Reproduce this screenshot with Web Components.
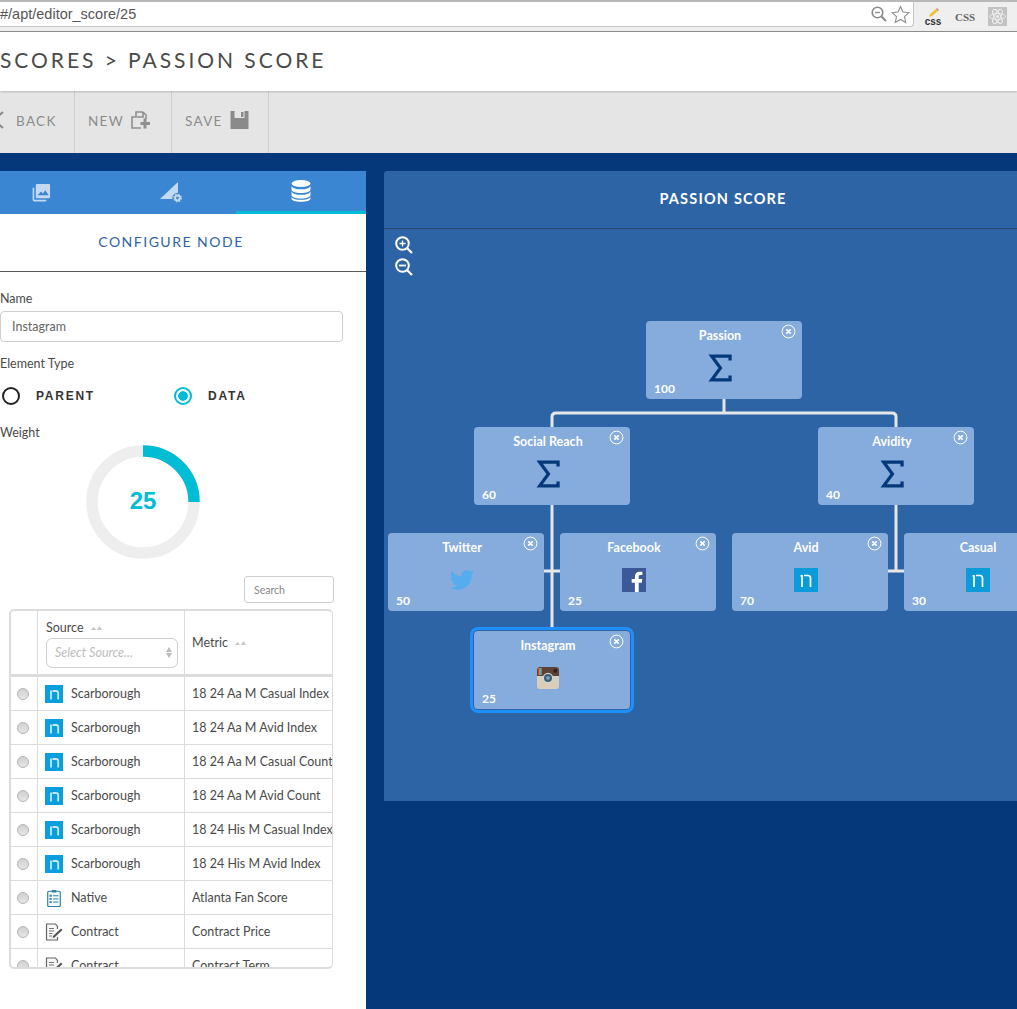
<!DOCTYPE html>
<html lang="en">
<head>
<meta charset="utf-8">
<title>Passion Score</title>
<style>
  html, body { margin: 0; padding: 0; }
  body { width: 1017px; height: 1009px; overflow: hidden; font-family: Lato, "Liberation Sans", sans-serif; background: #04387b; }
</style>
</head>
<body>
<browser-bar>#/apt/editor_score/25</browser-bar>
<page-title>SCORES &gt; PASSION SCORE</page-title>
<tool-bar>
  <tool-item icon="back">BACK</tool-item>
  <tool-item icon="new" after>NEW</tool-item>
  <tool-item icon="save" after>SAVE</tool-item>
</tool-bar>
<editor-main>
  <side-panel>
    <side-tabs></side-tabs>
    <node-form></node-form>
    <source-table>
      <source-row icon="nielsen" source="Scarborough" metric="18 24 Aa M Casual Index"></source-row>
      <source-row icon="nielsen" source="Scarborough" metric="18 24 Aa M Avid Index"></source-row>
      <source-row icon="nielsen" source="Scarborough" metric="18 24 Aa M Casual Count"></source-row>
      <source-row icon="nielsen" source="Scarborough" metric="18 24 Aa M Avid Count"></source-row>
      <source-row icon="nielsen" source="Scarborough" metric="18 24 His M Casual Index"></source-row>
      <source-row icon="nielsen" source="Scarborough" metric="18 24 His M Avid Index"></source-row>
      <source-row icon="native" source="Native" metric="Atlanta Fan Score"></source-row>
      <source-row icon="contract" source="Contract" metric="Contract Price"></source-row>
      <source-row icon="contract" source="Contract" metric="Contract Term"></source-row>
    </source-table>
  </side-panel>
  <score-canvas heading="PASSION SCORE">
    <tree-node x="262" y="150" name="Passion" weight="100" icon="sigma"></tree-node>
    <tree-node x="90" y="256" name="Social Reach" weight="60" icon="sigma"></tree-node>
    <tree-node x="434" y="256" name="Avidity" weight="40" icon="sigma"></tree-node>
    <tree-node x="4" y="362" name="Twitter" weight="50" icon="twitter"></tree-node>
    <tree-node x="176" y="362" name="Facebook" weight="25" icon="facebook"></tree-node>
    <tree-node x="348" y="362" name="Avid" weight="70" icon="nielsen-thin"></tree-node>
    <tree-node x="520" y="362" name="Casual" weight="30" icon="nielsen-thin"></tree-node>
    <tree-node x="90" y="460" name="Instagram" weight="25" icon="instagram" selected></tree-node>
  </score-canvas>
</editor-main>

<script>
// every icon on the page, drawn by hand
const ICONS = {
  back: `<svg viewBox="0 0 16 18"><path d="M13 1 4 9l9 8" fill="none" stroke="#8a8a8a" stroke-width="2"/></svg>`,
  new: `<svg viewBox="0 0 19 18"><path d="M12 1H5v5H1v11h9M12 1v5h-6M12 1l3 3v4" fill="none" stroke="#8f8f8f" stroke-width="1.6"/><path d="M14 7.5v10M9.5 12.5h9.5" stroke="#8f8f8f" stroke-width="3"/></svg>`,
  save: `<svg viewBox="0 0 18 18"><path d="M0 0h18v18H0z" fill="#8a8a8a"/><path d="M4 0h10v7H4z" fill="#e5e5e5"/><path d="M10.500 1h2.500v5h-2.500z" fill="#8a8a8a"/></svg>`,
  images: `<svg viewBox="0 0 20 20"><path d="M5 1h13a1 1 0 0 1 1 1v13a1 1 0 0 1-1 1H5a1 1 0 0 1-1-1V2a1 1 0 0 1 1-1z" fill="#c3d9f1"/><path d="M6 13l3.500-4 2 2 2.500-3.500L17.500 13z" fill="#3b86d2"/><path d="M1.500 5v12.500a1 1 0 0 0 1 1H15" fill="none" stroke="#c3d9f1" stroke-width="1.700"/></svg>`,
  shape: `<svg viewBox="0 0 22 21"><path d="M18 0v17H0z" fill="#c3d9f1"/><circle cx="17.500" cy="16" r="5.200" fill="#3b86d2"/><circle cx="17.500" cy="16" r="2.400" fill="none" stroke="#c3d9f1" stroke-width="2"/><circle cx="17.500" cy="16" r="3.800" fill="none" stroke="#c3d9f1" stroke-width="1.200" stroke-dasharray="1.500 1.500"/></svg>`,
  data: `<svg viewBox="0 0 20 22"><ellipse cx="10" cy="3.500" rx="9.500" ry="3.500" fill="#fff"/><path d="M.5 6c1 2.500 5 3.300 9.500 3.300S18.500 8.500 19.500 6v3.500c0 2.200-4 3.600-9.500 3.600S.5 11.700.5 9.500zM.5 11.500c1 2.500 5 3.300 9.500 3.300s8.500-.8 9.500-3.300V15c0 2.200-4 3.600-9.500 3.600S.5 17.200.5 15z" fill="#fff"/><path d="M.5 17c1 2 5 2.800 9.500 2.800s8.500-.8 9.500-2.800v1.500c0 2-4 3.300-9.500 3.300S.5 20.500.5 18.500z" fill="#fff"/></svg>`,
  sigma: `<svg viewBox="0 0 26 32"><path d="M24.500 7.500V2.500H3.500l10 13.500-10 13.500h21v-5" fill="none" stroke="#04387b" stroke-width="3.700"/></svg>`,
  twitter: `<svg viewBox="0 0 24 24"><path fill="#55acee" d="M23.953 4.570a10 10 0 0 1-2.825.775 4.958 4.958 0 0 0 2.163-2.723c-.951.555-2.005.959-3.127 1.184a4.920 4.920 0 0 0-8.384 4.482C7.690 8.095 4.067 6.130 1.640 3.162a4.822 4.822 0 0 0-.666 2.475c0 1.710.870 3.213 2.188 4.096a4.904 4.904 0 0 1-2.228-.616v.060a4.923 4.923 0 0 0 3.946 4.827 4.996 4.996 0 0 1-2.212.085 4.936 4.936 0 0 0 4.604 3.417 9.867 9.867 0 0 1-6.102 2.105c-.390 0-.779-.023-1.170-.067a13.995 13.995 0 0 0 7.557 2.209c9.053 0 13.998-7.496 13.998-13.985 0-.210 0-.420-.015-.630A9.935 9.935 0 0 0 24 4.590z"/></svg>`,
  facebook: `<svg viewBox="0 0 24 24"><path fill="#3b5998" d="M0 0h24v24H0z"/><path fill="#fff" d="M16.700 24v-9.300h3.100l.5-3.600h-3.600V8.800c0-1 .3-1.800 1.800-1.800h1.900V3.800c-.3 0-1.500-.1-2.800-.1-2.800 0-4.700 1.700-4.700 4.800v2.600H9.700v3.600h3.200V24z"/></svg>`,
  nielsen: `<svg viewBox="0 0 18 18"><path fill="#0a9fdc" d="M0 0h18v18H0z"/><path d="M6 5.500v9" fill="none" stroke="#c7e7f6" stroke-width="1.800"/><path d="M7.500 6h3.500q2.200 0 2.200 2.200v6.300" fill="none" stroke="#c7e7f6" stroke-width="1.800"/></svg>`,
  "nielsen-thin": `<svg viewBox="0 0 24 24"><path fill="#0a9bd8" d="M0 0h24v24H0z"/><path d="M6.500 7.800h1.500V19M10 7.500h4q2.500 0 2.500 2.700V19" fill="none" stroke="#fff" stroke-width="1.700"/></svg>`,
  instagram: `<svg viewBox="0 0 22 22"><rect width="22" height="22" rx="3" fill="#d9cfbb"/><path d="M0 9V3a3 3 0 0 1 3-3h16a3 3 0 0 1 3 3v6h-6.500a5.500 5.500 0 0 0-9 0z" fill="#5b4436"/><path d="M1.200 1h1.200v7h-1.200z" fill="#e0413c"/><path d="M2.400 1h1.200v7h-1.200z" fill="#f0c33c"/><path d="M3.600 1h1.200v7h-1.200z" fill="#4da0d8"/><circle cx="11" cy="11" r="5.200" fill="#cfd3d6"/><circle cx="11" cy="11" r="4" fill="#3f6178"/><circle cx="11" cy="11" r="1.800" fill="#86a3b8"/><rect x="16.500" y="2" width="3.500" height="3.500" fill="#2e241d"/></svg>`,
  native: `<svg viewBox="0 0 18 20"><rect x="2" y="2.500" width="14" height="17" rx="1.500" fill="#f4f9fc" stroke="#2f7fa8" stroke-width="1.300"/><path d="M6.500 1h5v3h-5z" fill="#2f7fa8"/><path d="M8 7.500h6M8 11h6M8 14.500h6" stroke="#2f7fa8" stroke-width="1.100"/><path d="M4 6.500h2.500v2H4zM4 10h2.500v2H4zM4 13.500h2.500v2H4z" fill="#2f7fa8"/></svg>`,
  contract: `<svg viewBox="0 0 18 18"><path d="M12.500 6V3.500L10.500 1H1.500v16h11v-3" fill="#f7f7f7" stroke="#666" stroke-width="1.200"/><path d="M4 5.500h5M4 8h5M4 10.500h3.500M4 13h3" stroke="#777" stroke-width="1"/><path d="M8 13l8-7.500 1.500 1.500-8 7.500-2 .5z" fill="#555"/></svg>`,
  close: `<svg viewBox="0 0 15 15"><circle cx="7.500" cy="7.500" r="6.400" fill="none" stroke="#fff" stroke-width="1"/><path d="M5.300 5.300l4.400 4.400M9.700 5.300l-4.400 4.400" stroke="#fff" stroke-width="1.700"/></svg>`,
  zoomin: `<svg viewBox="0 0 18 18"><circle cx="7.500" cy="7.500" r="6.300" fill="none" stroke="#fff" stroke-width="2"/><path d="M12 12l5 5" stroke="#fff" stroke-width="2.200"/><path d="M7.500 4.500v6M4.500 7.500h6" stroke="#fff" stroke-width="1.300"/></svg>`,
  zoomout: `<svg viewBox="0 0 18 18"><circle cx="7.500" cy="7.500" r="6.300" fill="none" stroke="#fff" stroke-width="2"/><path d="M12 12l5 5" stroke="#fff" stroke-width="2.200"/><path d="M4 7.500h7" stroke="#fff" stroke-width="1.800"/></svg>`
};

class BrowserBar extends HTMLElement {
  constructor() {
    super();
    this.attachShadow({ mode: 'open' });
  }

  connectedCallback() {
    this.shadowRoot.innerHTML = `
      <style>
        :host { display: flex; height: 32px; box-sizing: border-box; background: #efefef; border-top: 2px solid #b9b9b9; border-bottom: 1px solid #8f8f8f; font-family: "Liberation Sans", sans-serif; }
        .url { width: 914px; height: 25px; box-sizing: border-box; background: #fff; border: 1px solid #c4c4c4; border-left: 0; border-top: 0; border-radius: 0 0 4px 0; display: flex; align-items: center; justify-content: space-between; padding-right: 3px; font-size: 14.500px; color: #555; }
        .btns { display: flex; gap: 4px; align-items: center; }
        .exts { flex: 1; display: flex; align-items: center; position: relative; }
        .pencil { width: 24px; margin-left: 7px; display: flex; flex-direction: column; align-items: center; font-size: 10px; font-weight: bold; line-height: 8px; color: #333; }
        .css { margin-left: 10px; font: bold 11px "Liberation Serif", serif; color: #666; }
        .atom { margin-left: 13px; width: 19px; height: 19px; background: #c2c2c2; }
        svg { display: block; }
      </style>
      <div class="url">
        <span><slot></slot></span>
        <span class="btns">
          <svg width="16" height="16" viewBox="0 0 16 16"><circle cx="6.500" cy="6.500" r="5.300" fill="none" stroke="#8a8a8a" stroke-width="1.600"/><path d="M10.500 10.500l4.500 4.500" stroke="#8a8a8a" stroke-width="2"/><path d="M4 6.500h5" stroke="#8a8a8a" stroke-width="1.300"/></svg>
          <svg width="19" height="19" viewBox="0 0 20 20"><path d="M10 1.500l2.600 5.800 6.200.7-4.600 4.200 1.300 6.200L10 15.200l-5.500 3.200 1.300-6.200L1.200 8l6.200-.7z" fill="none" stroke="#8a8a8a" stroke-width="1.100"/></svg>
        </span>
      </div>
      <div class="exts">
        <span class="pencil">
          <svg width="14" height="10" viewBox="0 0 14 10"><path d="M3 9l1-3 6-5 2 2-6 5z" fill="#f2c230"/><path d="M10 1l1-1 2 2-1 1z" fill="#e77a8c"/></svg>css
        </span>
        <span class="css">CSS</span>
        <span class="atom">
          <svg width="19" height="19" viewBox="0 0 19 19"><g fill="none" stroke="#efefef" stroke-width=".9"><ellipse cx="9.500" cy="9.500" rx="8" ry="3"/><ellipse cx="9.500" cy="9.500" rx="8" ry="3" transform="rotate(60 9.500 9.500)"/><ellipse cx="9.500" cy="9.500" rx="8" ry="3" transform="rotate(120 9.500 9.500)"/></g><circle cx="9.500" cy="9.500" r="1.500" fill="#efefef"/></svg>
        </span>
      </div>
    `;
  }
}

class PageTitle extends HTMLElement {
  constructor() {
    super();
    this.attachShadow({ mode: 'open' });
  }

  connectedCallback() {
    this.shadowRoot.innerHTML = `
      <style>
        :host { display: flex; align-items: center; height: 59px; box-sizing: border-box; padding-bottom: 5px; background: #fff; font-size: 21px; letter-spacing: 2.950px; color: #4a4a4a; position: relative; box-shadow: 0 1px 2px rgba(0,0,0,.2); }
      </style>
      <slot></slot>
    `;
  }
}

class ToolBar extends HTMLElement {
  constructor() {
    super();
    this.attachShadow({ mode: 'open' });
  }

  connectedCallback() {
    this.shadowRoot.innerHTML = `
      <style>
        :host { display: flex; height: 62px; margin-left: -22px; background: #e5e5e5; }
      </style>
      <slot></slot>
    `;
  }
}

class ToolItem extends HTMLElement {
  constructor() {
    super();
    this.attachShadow({ mode: 'open' });
  }

  connectedCallback() {
    const name = this.getAttribute('icon');
    const size = name === 'back' ? 'width:16px;height:18px' : 'width:19px;height:18px';
    const icon = `<span class="icon" style="${size}">${ICONS[name]}</span>`;
    this.shadowRoot.innerHTML = `
      <style>
        :host { display: flex; align-items: center; gap: 7px; width: 97px; box-sizing: border-box; padding: 0 0 2px 13px; border-right: 1px solid #cfcfcf; font-size: 13.500px; letter-spacing: 1.300px; color: #8c8c8c; }
        .icon { display: block; margin-top: -2px; }
        svg { display: block; width: 100%; height: 100%; }
        :host([icon="back"]) { gap: 10px; padding-left: 12px; }
      </style>
      ${this.hasAttribute('after') ? '<slot></slot>' + icon : icon + '<slot></slot>'}
    `;
  }
}

class EditorMain extends HTMLElement {
  constructor() {
    super();
    this.attachShadow({ mode: 'open' });
  }

  connectedCallback() {
    this.shadowRoot.innerHTML = `
      <style>
        :host { display: flex; align-items: flex-start; gap: 18px; height: 838px; padding-top: 18px; margin-left: -24px; background: #04387b; overflow: hidden; }
      </style>
      <slot></slot>
    `;
  }
}

class SidePanel extends HTMLElement {
  constructor() {
    super();
    this.attachShadow({ mode: 'open' });
  }

  connectedCallback() {
    this.shadowRoot.innerHTML = `
      <style>
        :host { display: block; flex: none; width: 390px; height: 838px; background: #fff; }
      </style>
      <slot></slot>
    `;
  }
}

class SideTabs extends HTMLElement {
  constructor() {
    super();
    this.attachShadow({ mode: 'open' });
  }

  connectedCallback() {
    this.shadowRoot.innerHTML = `
      <style>
        :host { display: block; }
        .tabs { display: flex; height: 43px; background: #3b86d2; }
        .tab { flex: 1; display: flex; align-items: center; justify-content: center; box-sizing: border-box; }
        .tab.on { border-bottom: 3px solid #00bcd4; }
        .tab svg { display: block; }
        h2 { margin: 0; height: 58px; box-sizing: border-box; display: flex; align-items: center; justify-content: center; border-bottom: 1px solid #5a5a5a; font-size: 14px; font-weight: 400; letter-spacing: 1.500px; color: #2d64a6; padding-bottom: 3px; }
      </style>
      <div class="tabs">
        <div class="tab"><svg width="19" height="19" viewBox="0 0 20 20">${ICONS.images.replace(/<\/?svg[^>]*>/g, '')}</svg></div>
        <div class="tab"><svg width="22" height="21" viewBox="0 0 22 21">${ICONS.shape.replace(/<\/?svg[^>]*>/g, '')}</svg></div>
        <div class="tab on"><svg width="20" height="22" viewBox="0 0 20 22">${ICONS.data.replace(/<\/?svg[^>]*>/g, '')}</svg></div>
      </div>
      <h2>CONFIGURE NODE</h2>
    `;
  }
}

class NodeForm extends HTMLElement {
  constructor() {
    super();
    this.attachShadow({ mode: 'open' });
  }

  connectedCallback() {
    this.shadowRoot.innerHTML = `
      <style>
        :host { display: block; padding: 19px 23px 0 24px; font-size: 12.500px; color: #4a4a4a; }
        label { display: block; line-height: 16px; }
        .input { height: 31px; box-sizing: border-box; margin: 4px 0 14px; padding-left: 11px; display: flex; align-items: center; border: 1px solid #cfcfcf; border-radius: 4px; color: #666; }
        .types { display: flex; align-items: center; height: 18px; margin: 15px 0 20px 2px; font: bold 12px "Liberation Sans", sans-serif; letter-spacing: 1.750px; color: #333; }
        .types span { display: flex; align-items: center; gap: 16px; }
        .types .parent { width: 172px; }
        .types .data { gap: 16px; }
        .ring { box-sizing: border-box; display: block; width: 18px; height: 18px; border-radius: 50%; border: 2px solid #222; }
        .data .ring { border-color: #00bcd4; background: radial-gradient(circle, #00bcd4 0 4.500px, transparent 5px); }
      </style>
      <label>Name</label>
      <div class="input">Instagram</div>
      <label>Element Type</label>
      <div class="types">
        <span class="parent"><i class="ring"></i>PARENT</span>
        <span class="data"><i class="ring"></i>DATA</span>
      </div>
      <label>Weight</label>
      <weight-donut value="25"></weight-donut>
    `;
  }
}

class WeightDonut extends HTMLElement {
  constructor() {
    super();
    this.attachShadow({ mode: 'open' });
  }

  connectedCallback() {
    this.shadowRoot.innerHTML = `
      <style>
        :host { display: block; width: 114px; height: 115px; margin: 4px 0 0 86px; position: relative; }
        svg { display: block; }
        b { position: absolute; inset: 0; display: flex; align-items: center; justify-content: center; font: bold 24px "Liberation Sans", sans-serif; color: #00bcd4; padding-bottom: 3px; box-sizing: border-box; }
      </style>
      <svg width="114" height="114" viewBox="0 0 115 115">
        <circle cx="57.500" cy="57.500" r="51.500" fill="none" stroke="#eeeeee" stroke-width="11.500"/>
        <path d="M57.500 6a51.500 51.500 0 0 1 51.500 51.500" fill="none" stroke="#00bcd4" stroke-width="11.500"/>
      </svg>
      <b>${this.getAttribute('value')}</b>
    `;
  }
}

class SourceTable extends HTMLElement {
  constructor() {
    super();
    this.attachShadow({ mode: 'open' });
  }

  connectedCallback() {
    this.shadowRoot.innerHTML = `
      <style>
        :host { display: block; margin-left: 33px; width: 324px; font-size: 12.500px; color: #4a4a4a; }
        .search { width: 90px; height: 27px; box-sizing: border-box; margin: 16px 0 6px 235px; padding-left: 9px; display: flex; align-items: center; border: 1px solid #cfcfcf; border-radius: 3px; font-size: 10.500px; color: #888; }
        .box { height: 360px; box-sizing: border-box; border: 2px solid #dcdcdc; border-right-width: 1.500px; border-radius: 5px; overflow: hidden; }
        .head { display: grid; grid-template-columns: 27px 147px 1fr; height: 66px; box-sizing: border-box; border-bottom: 3px solid #dcdcdc; }
        .head > div { border-right: 1px solid #dcdcdc; box-sizing: border-box; }
        .head > div:last-child { border-right: 0; padding: 24px 0 0 7px; }
        .src { padding: 9px 6px 0 8px; }
        .sort { display: inline-block; width: 12px; height: 5px; margin-left: 4px; vertical-align: 2px; }
        .select { height: 30px; box-sizing: border-box; margin-top: 3px; border: 1px solid #cfcfcf; border-radius: 6px; display: flex; align-items: center; justify-content: space-between; padding: 0 5px 2px 8px; font-style: italic; font-size: 12.500px; color: #bdbdbd; }
        .arrows { display: flex; flex-direction: column; gap: 1px; }
      </style>
      <div class="search">Search</div>
      <div class="box">
        <div class="head">
          <div></div>
          <div class="src">Source <svg class="sort" viewBox="0 0 12 5"><path d="M0 5l2.500-3L5 5zM6 5l2.500-4L11 5z" fill="#c4c4c4"/></svg>
            <div class="select">Select Source...
              <span class="arrows">
                <svg width="6" height="5" viewBox="0 0 6 5"><path d="M3 0l3 5H0z" fill="#bbb"/></svg>
                <svg width="6" height="5" viewBox="0 0 6 5"><path d="M3 5L0 0h6z" fill="#bbb"/></svg>
              </span>
            </div>
          </div>
          <div>Metric <svg class="sort" viewBox="0 0 12 5"><path d="M0 5l2.500-3L5 5zM6 5l2.500-4L11 5z" fill="#c4c4c4"/></svg></div>
        </div>
        <slot></slot>
      </div>
    `;
  }
}

class SourceRow extends HTMLElement {
  constructor() {
    super();
    this.attachShadow({ mode: 'open' });
  }

  connectedCallback() {
    this.shadowRoot.innerHTML = `
      <style>
        :host { display: grid; grid-template-columns: 27px 147px 1fr; height: 34px; box-sizing: border-box; border-bottom: 1px solid #dcdcdc; }
        div { display: flex; align-items: center; box-sizing: border-box; white-space: nowrap; overflow: hidden; }
        .pick { justify-content: center; padding-right: 2px; border-right: 1px solid #dcdcdc; }
        .pick i { display: block; width: 10px; height: 10px; border-radius: 50%; border: 1px solid #b5b5b5; background: linear-gradient(#d0d0d0, #e6e6e6); }
        .src { gap: 8px; padding-left: 7px; border-right: 1px solid #dcdcdc; }
        .src span { display: block; width: 18px; height: 18px; flex: none; }
        .src svg { display: block; width: 18px; height: 18px; }
        .metric { padding-left: 7px; }
      </style>
      <div class="pick"><i></i></div>
      <div class="src"><span>${ICONS[this.getAttribute('icon')]}</span>${this.getAttribute('source')}</div>
      <div class="metric">${this.getAttribute('metric')}</div>
    `;
  }
}

class ScoreCanvas extends HTMLElement {
  constructor() {
    super();
    this.attachShadow({ mode: 'open' });
  }

  connectedCallback() {
    this.shadowRoot.innerHTML = `
      <style>
        :host { display: block; flex: none; width: 700px; height: 630px; position: relative; background: #2d64a6; border-radius: 3px 0 0 0; overflow: hidden; }
        h1 { margin: 0; height: 58px; box-sizing: border-box; display: flex; align-items: center; justify-content: center; padding: 0 22px 3px 0; border-bottom: 1px solid #29466c; font-size: 14.500px; font-weight: 700; letter-spacing: 1.200px; color: #fff; }
        .zoom { display: flex; flex-direction: column; gap: 4px; padding: 7px 0 0 11px; }
        .zoom svg { display: block; width: 18px; height: 18px; }
        .wires { position: absolute; left: 0; top: 0; }
      </style>
      <h1>${this.getAttribute('heading')}</h1>
      <div class="zoom">${ICONS.zoomin}${ICONS.zoomout}</div>
      <svg class="wires" width="700" height="630" fill="none" stroke="#e4e6e8" stroke-width="3">
        <path d="M340 228v14"/>
        <path d="M168 256v-10q0-4 4-4h336q4 0 4 4v10"/>
        <path d="M168 334v126"/>
        <path d="M160 400h16"/>
        <path d="M512 334v66"/>
        <path d="M504 400h16"/>
      </svg>
      <slot></slot>
    `;
  }
}

class TreeNode extends HTMLElement {
  constructor() {
    super();
    this.attachShadow({ mode: 'open' });
  }

  connectedCallback() {
    this.style.left = this.getAttribute('x') + 'px';
    this.style.top = this.getAttribute('y') + 'px';
    this.shadowRoot.innerHTML = `
      <style>
        :host { position: absolute; width: 156px; height: 78px; box-sizing: border-box; padding: 7px 8px 0 0; display: flex; flex-direction: column; align-items: center; background: #85acdc; border-radius: 4px; color: #fff; font-size: 12.500px; font-weight: 700; }
        :host([selected]) { box-shadow: 0 0 0 1px #2f62a5, 0 0 0 4px #1f8ffb; }
        .name { line-height: 15px; height: 15px; }
        .icon { width: 24px; height: 24px; margin-top: 13px; }
        :host([icon="sigma"]) .icon { margin-top: 11px; height: 28px; }
        :host([icon="instagram"]) .icon { width: 22px; height: 22px; margin-top: 14px; }
        .icon svg { display: block; width: 100%; height: 100%; }
        .weight { position: absolute; left: 8px; bottom: 3px; line-height: 15px; font-size: 12px; }
        .close { position: absolute; right: 6px; top: 3px; width: 15px; height: 15px; }
        .close svg { display: block; }
      </style>
      <div class="name">${this.getAttribute('name')}</div>
      <div class="icon">${ICONS[this.getAttribute('icon')]}</div>
      <div class="weight">${this.getAttribute('weight')}</div>
      <div class="close">${ICONS.close}</div>
    `;
  }
}

customElements.define('browser-bar', BrowserBar);
customElements.define('page-title', PageTitle);
customElements.define('tool-bar', ToolBar);
customElements.define('tool-item', ToolItem);
customElements.define('editor-main', EditorMain);
customElements.define('side-panel', SidePanel);
customElements.define('side-tabs', SideTabs);
customElements.define('node-form', NodeForm);
customElements.define('weight-donut', WeightDonut);
customElements.define('source-table', SourceTable);
customElements.define('source-row', SourceRow);
customElements.define('score-canvas', ScoreCanvas);
customElements.define('tree-node', TreeNode);
</script>
</body>
</html>
